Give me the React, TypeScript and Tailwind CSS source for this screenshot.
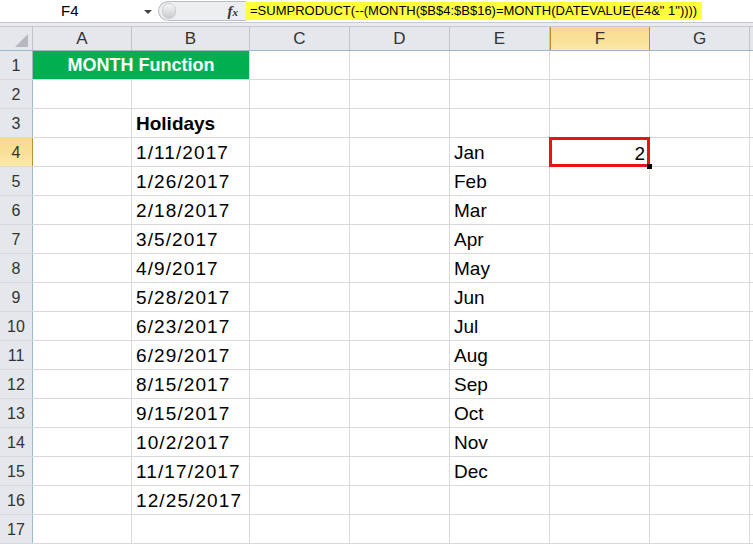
import React from 'react';

const cols = [
  { key: 'A', w: 99 },
  { key: 'B', w: 118 },
  { key: 'C', w: 100 },
  { key: 'D', w: 100 },
  { key: 'E', w: 100 },
  { key: 'F', w: 100 },
  { key: 'G', w: 100 },
  { key: 'H', w: 100 },
];

const dates = [
  '1/11/2017', '1/26/2017', '2/18/2017', '3/5/2017', '4/9/2017', '5/28/2017', '6/23/2017',
  '6/29/2017', '8/15/2017', '9/15/2017', '10/2/2017', '11/17/2017', '12/25/2017',
];
const months = ['Jan', 'Feb', 'Mar', 'Apr', 'May', 'Jun', 'Jul', 'Aug', 'Sep', 'Oct', 'Nov', 'Dec'];

const font = { fontFamily: '"Liberation Sans", Arial, sans-serif' };

// Formula bar row at top
const FormulaBar = () => (
  <div className="flex h-[23px] items-stretch overflow-hidden bg-white border-b border-[#c5c9cf]">
    <div className="relative flex w-[158px] shrink-0 items-center text-[15px] text-black">
      <span className="ml-[61px]">F4</span>
      <span className="absolute right-[6px] top-[10px] h-0 w-0 border-x-[4px] border-t-[4px] border-x-transparent border-t-[#444]" />
    </div>
    <div className="my-[1px] flex w-[88px] shrink-0 items-center rounded-l-[12px] border border-r-0 border-[#b9bdc3] bg-[#eceef1]">
      <div className="ml-[3px] h-[16px] w-[14px] rounded-full bg-gradient-to-b from-[#f6f6f6] to-[#c8cbd0] border border-[#c9ccd1]" />
      <span className="ml-auto mr-[8px] text-[15px] italic font-bold text-[#333]" style={{ fontFamily: '"Liberation Serif", serif' }}>
        f<span className="text-[11px]">x</span>
      </span>
    </div>
    <div className="flex min-w-0 flex-1 items-center">
      <div className="flex h-[18px] items-center bg-[#ffff3c] pl-[4px] pr-[5px] text-[13px] text-black whitespace-nowrap">
        =SUMPRODUCT(--(MONTH($B$4:$B$16)=MONTH(DATEVALUE(E4&amp;" 1"))))
      </div>
    </div>
  </div>
);

const ColumnHeaders = () => (
  <div className="flex h-[24px] border-b border-[#9eb6ce]">
    <div className="relative w-[33px] shrink-0 border-r border-[#c0c4ca] bg-[#e4e7eb]">
      <span className="absolute bottom-[3px] right-[4px] h-0 w-0 border-l-[13px] border-b-[13px] border-l-transparent border-b-[#b5b9bf]" />
    </div>
    {cols.map((c) =>
      c.key === 'F' ? (
        <div
          key={c.key}
          style={{ width: c.w }}
          className="flex shrink-0 items-center justify-center border-x border-[#c28a30] bg-gradient-to-b from-[#f9d889] to-[#fbe9a8] text-[17px] text-[#333]"
        >
          {c.key}
        </div>
      ) : (
        <div
          key={c.key}
          style={{ width: c.w }}
          className="flex shrink-0 items-center justify-center border-r border-[#c0c4ca] bg-[#e4e7eb] text-[17px] text-[#333]"
        >
          {c.key}
        </div>
      )
    )}
  </div>
);

const Cell: React.FC<{ w: number; children?: React.ReactNode; className?: string }> = ({ w, children, className }) => (
  <div style={{ width: w }} className={`flex shrink-0 items-end pb-[4px] pl-[4px] border-r border-[#d9d9d9] text-[19px] leading-none text-black ${className ?? ''}`}>
    {children}
  </div>
);

const Row: React.FC<{ n: number }> = ({ n }) => {
  const active = n === 4;
  const b = n === 3 ? 'Holidays' : n >= 4 && n <= 16 ? dates[n - 4] : '';
  const e = n >= 4 && n <= 15 ? months[n - 4] : '';
  return (
    <div className="flex h-[29px] border-b border-[#d9d9d9]">
      <div
        className={`flex w-[33px] shrink-0 items-center justify-center border-r pt-[2px] text-[16px] text-[#333] ${
          active
            ? 'bg-gradient-to-b from-[#f9d889] to-[#fbe9a8] border-[#c28a30]'
            : 'bg-[#e4e7eb] border-[#9eb6ce]'
        }`}
      >
        {n}
      </div>
      {n === 1 ? (
        <div className="flex w-[217px] shrink-0 items-center justify-center bg-[#00b050] border-r border-[#d9d9d9] pt-[1px] text-[18px] font-bold text-white">
          MONTH Function
        </div>
      ) : (
        <>
          <Cell w={99} />
          <Cell w={118} className={n === 3 ? 'font-bold text-[18px]' : 'tracking-[1.1px]'}>{b}</Cell>
        </>
      )}
      <Cell w={100} />
      <Cell w={100} />
      <Cell w={100}>{e}</Cell>
      {active ? (
        <div className="relative w-[100px] shrink-0 border-r border-[#d9d9d9]">
          <div className="absolute -left-[1px] -top-[1px] flex h-[30px] w-[101px] items-end justify-end border-[3px] border-[#e8141c] pb-[1px] pr-[2px] text-[19px] leading-none text-black">
            2
          </div>
          <span className="absolute -bottom-[3px] -right-[3px] h-[5px] w-[5px] bg-black" />
        </div>
      ) : (
        <Cell w={100} />
      )}
      <Cell w={100} />
      <Cell w={100} />
    </div>
  );
};

export default function App() {
  return (
    <div className="h-[544px] w-[753px] overflow-hidden bg-white" style={font}>
      <FormulaBar />
      <div className="h-[4px] bg-[#e9ebee] border-b border-[#c5c9cf]" />
      <ColumnHeaders />
      {Array.from({ length: 18 }, (_, i) => (
        <Row key={i} n={i + 1} />
      ))}
    </div>
  );
}
